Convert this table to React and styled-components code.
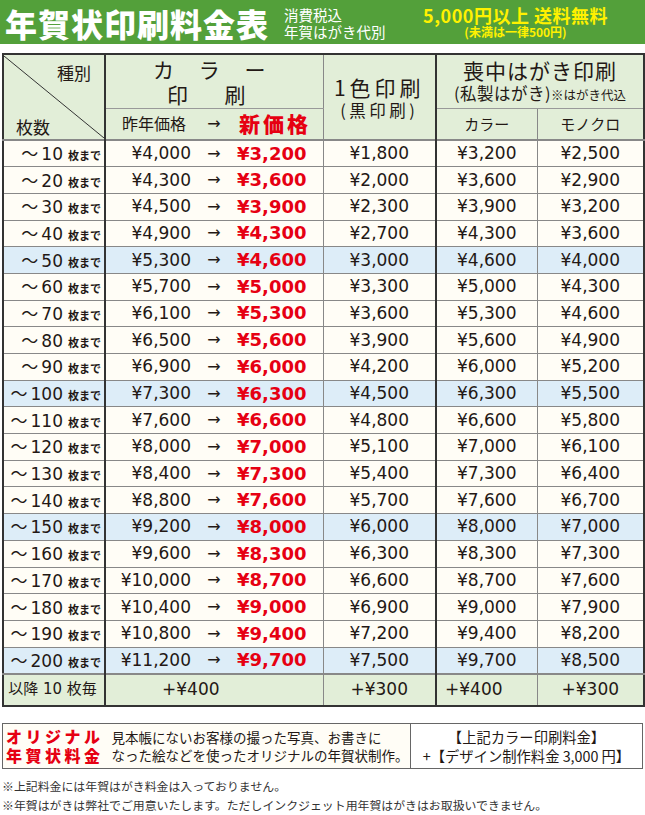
import React from 'react'
import styled, { createGlobalStyle } from 'styled-components'

const rows = [
  [10, 4000, 3200, 1800, 2500],
  [20, 4300, 3600, 2000, 2900],
  [30, 4500, 3900, 2300, 3200],
  [40, 4900, 4300, 2700, 3600],
  [50, 5300, 4600, 3000, 4000],
  [60, 5700, 5000, 3300, 4300],
  [70, 6100, 5300, 3600, 4600],
  [80, 6500, 5600, 3900, 4900],
  [90, 6900, 6000, 4200, 5200],
  [100, 7300, 6300, 4500, 5500],
  [110, 7600, 6600, 4800, 5800],
  [120, 8000, 7000, 5100, 6100],
  [130, 8400, 7300, 5400, 6400],
  [140, 8800, 7600, 5700, 6700],
  [150, 9200, 8000, 6000, 7000],
  [160, 9600, 8300, 6300, 7300],
  [170, 10000, 8700, 6600, 7600],
  [180, 10400, 9000, 6900, 7900],
  [190, 10800, 9400, 7200, 8200],
  [200, 11200, 9700, 7500, 8500],
]

const yen = n => '¥' + n.toLocaleString('en-US')

const App = () => {
  return (
    <>
      <GlobalStyle />
      <Page>
        <TitleBar>
          <Title>年賀状印刷料金表</Title>
          <TaxNote>
            <div>消費税込</div>
            <div>年賀はがき代別</div>
          </TaxNote>
          <Shipping>
            <ShipMain>5,000円以上 送料無料</ShipMain>
            <ShipSub>(未満は一律500円)</ShipSub>
          </Shipping>
        </TitleBar>

        <Table>
          <colgroup>
            <col style={{ width: 102 }} />
            <col style={{ width: 218 }} />
            <col style={{ width: 113 }} />
            <col style={{ width: 101 }} />
            <col style={{ width: 107 }} />
          </colgroup>
          <thead>
            <tr>
              <Th rowSpan={2} $diag>
                <DiagBox>
                  <DiagLine viewBox="0 0 100 100" preserveAspectRatio="none">
                    <line x1="0" y1="0" x2="100" y2="100" stroke="#333" strokeWidth="1" vectorEffect="non-scaling-stroke" />
                  </DiagLine>
                  <Kind>種別</Kind>
                  <Count>枚数</Count>
                </DiagBox>
              </Th>
              <Th $thick $h={53}>
                <BigHead $spacing={10}>カ ラ ー</BigHead>
                <BigHead $spacing={16}>印 刷</BigHead>
              </Th>
              <Th rowSpan={2} $thin>
                <BigHead $spacing={4}>1色印刷</BigHead>
                <SubHead $spacing={3.5}>(黒印刷)</SubHead>
              </Th>
              <Th colSpan={2} $thick>
                <BigHead $spacing={1}>喪中はがき印刷</BigHead>
                <SubHead $spacing={0.5}>(私製はがき)<Small>※はがき代込</Small></SubHead>
              </Th>
            </tr>
            <tr>
              <Th $thick $h={30}>
                <PriceGrid>
                  <OldHead>昨年価格</OldHead>
                  <Arrow>→</Arrow>
                  <NewHead>新価格</NewHead>
                </PriceGrid>
              </Th>
              <Th $thick><ColHead>カラー</ColHead></Th>
              <Th $thin><ColHead>モノクロ</ColHead></Th>
            </tr>
          </thead>
          <tbody>
            {rows.map(([n, oldP, newP, mono, mMono], i) => (
              <Tr key={n} $blue={n % 50 === 0} $first={i === 0}>
                <CountCell>
                  <Tilde>～</Tilde>{n}<Made>枚まで</Made>
                </CountCell>
                <Td $thick>
                  <PriceGrid>
                    <Old>{yen(oldP)}</Old>
                    <Arrow>→</Arrow>
                    <New>{yen(newP)}</New>
                  </PriceGrid>
                </Td>
                <Td $thin $center>{yen(mono)}</Td>
                <Td $thick $center>{yen(newP)}</Td>
                <Td $thin $center>{yen(mMono)}</Td>
              </Tr>
            ))}
            <Tr $green $last>
              <CountCell $plain>以降 10 枚毎</CountCell>
              <Td $thick><Extra $pad={56}>+¥400</Extra></Td>
              <Td $thin $center><Extra>+¥300</Extra></Td>
              <Td $thick><Extra $pad={8}>+¥400</Extra></Td>
              <Td $thin $center><Extra>+¥300</Extra></Td>
            </Tr>
          </tbody>
        </Table>

        <OriginalBox>
          <OriginalLeft>
            <OriginalTitle>
              <div>オリジナル</div>
              <div>年賀状料金</div>
            </OriginalTitle>
            <OriginalDesc>
              <div>見本帳にないお客様の撮った写真、お書きに</div>
              <div>なった絵などを使ったオリジナルの年賀状制作。</div>
            </OriginalDesc>
          </OriginalLeft>
          <OriginalRight>
            <div>【上記カラー印刷料金】</div>
            <div>+【デザイン制作料金 3,000 円】</div>
          </OriginalRight>
        </OriginalBox>

        <Notes>
          <div>※上記料金には年賀はがき料金は入っておりません。</div>
          <div>※年賀はがきは弊社でご用意いたします。ただしインクジェット用年賀はがきはお取扱いできません。</div>
        </Notes>
      </Page>
    </>
  )
}

export default App

const GlobalStyle = createGlobalStyle`
  body {
    margin: 0;
    background: #fff;
    color: #231815;
    font-family: "Noto Sans CJK JP", sans-serif;
  }
`
const Page = styled.div`
  width: 645px;
  display: flex;
  flex-direction: column;
`
const TitleBar = styled.div`
  height: 44px;
  background: #53a03a;
  display: flex;
  align-items: center;
  padding: 0 0 0 5px;
  box-sizing: border-box;
`
const Title = styled.div`
  color: #fff;
  font-size: 32px;
  font-weight: 900;
  letter-spacing: 1px;
  line-height: 1;
  margin-top: 1px;
`
const TaxNote = styled.div`
  color: #fff;
  font-size: 14.5px;
  line-height: 17px;
  margin-left: 15px;
  margin-top: 2px;
`
const Shipping = styled.div`
  color: #fff100;
  font-weight: 700;
  text-align: center;
  margin-left: 30px;
  width: 200px;
`
const ShipMain = styled.div`
  font-size: 18px;
  letter-spacing: 0.5px;
  line-height: 20px;
`
const ShipSub = styled.div`
  font-size: 12px;
  line-height: 14px;
`
const Table = styled.table`
  margin: 9px 0 0 2px;
  width: 641px;
  border-collapse: collapse;
  table-layout: fixed;
  border: 2px solid #333;
`
const Th = styled.th`
  background: #e2eed8;
  font-weight: 400;
  padding: 0;
  height: ${p => (p.$h ? p.$h + 'px' : 'auto')};
  border-left: ${p => (p.$thick ? '2px solid #333' : p.$thin ? '1px solid #888' : 'none')};
  border-bottom: 1px solid #999;
  vertical-align: middle;
  text-align: center;
  line-height: 1.1;
  position: ${p => (p.$diag ? 'relative' : 'static')};
`
const DiagBox = styled.div`
  position: relative;
  height: 82px;
  display: flex;
  flex-direction: column;
  justify-content: space-between;
`
const DiagLine = styled.svg`
  position: absolute;
  inset: 0;
  width: 100%;
  height: 100%;
`
const Kind = styled.div`
  font-size: 17px;
  text-align: right;
  padding: 8px 13px 0 0;
`
const Count = styled.div`
  font-size: 17px;
  text-align: left;
  padding: 0 0 1px 12px;
`
const BigHead = styled.div`
  font-size: 21px;
  letter-spacing: ${p => p.$spacing || 0}px;
  line-height: 25px;
`
const SubHead = styled.div`
  font-size: 16.5px;
  letter-spacing: ${p => p.$spacing || 0}px;
  line-height: 20px;
`
const Small = styled.span`
  font-size: 12.5px;
  letter-spacing: 0;
`
const ColHead = styled.div`
  font-size: 15px;
`
const PriceGrid = styled.div`
  display: grid;
  grid-template-columns: 85px 46px 1fr;
  align-items: center;
`
const OldHead = styled.div`
  font-size: 16px;
  text-align: right;
  padding-right: 5px;
`
const NewHead = styled.div`
  font-size: 21px;
  font-weight: 900;
  color: #e60012;
  letter-spacing: 3px;
  text-align: left;
  padding-left: 2px;
`
const Arrow = styled.div`
  font-family: "DejaVu Sans", sans-serif;
  font-size: 16px;
  text-align: center;
`
const Tr = styled.tr`
  height: ${p => (p.$last ? '32px' : '26.7px')};
  background: ${p => (p.$green ? '#e2eed8' : p.$blue ? '#ddedf8' : '#fffdf6')};
  border-top: ${p => (p.$first || p.$last ? '2px solid #888' : '1px solid #888')};
`
const Td = styled.td`
  padding: 0;
  font-family: "DejaVu Sans", "Noto Sans CJK JP", sans-serif;
  font-size: 17px;
  color: #231815;
  text-align: ${p => (p.$center ? 'center' : 'left')};
  border-left: ${p => (p.$thick ? '2px solid #333' : p.$thin ? '1px solid #888' : 'none')};
  vertical-align: middle;
  line-height: 1;
`
const CountCell = styled.td`
  padding: 0 3px 0 0;
  text-align: ${p => (p.$plain ? 'center' : 'right')};
  font-family: "DejaVu Sans", "Noto Sans CJK JP", sans-serif;
  font-size: ${p => (p.$plain ? '15px' : '17px')};
  vertical-align: middle;
  line-height: 1;
  white-space: nowrap;
`
const Tilde = styled.span`
  font-family: "Noto Sans CJK JP", sans-serif;
  font-size: 17px;
  margin-right: 3px;
`
const Made = styled.span`
  font-family: "Noto Sans CJK JP", sans-serif;
  font-size: 11px;
  font-weight: 700;
  margin-left: 5px;
`
const Old = styled.div`
  text-align: right;
`
const New = styled.div`
  color: #e60012;
  font-weight: 700;
  font-size: 18px;
`
const Extra = styled.div`
  padding-left: ${p => p.$pad || 0}px;
  font-size: 17px;
`
const OriginalBox = styled.div`
  margin: 16px 2px 0 2px;
  height: 46px;
  border: 1px solid #666;
  display: flex;
  box-sizing: border-box;
`
const OriginalLeft = styled.div`
  width: 407px;
  flex-shrink: 0;
  background: #fffdf6;
  display: flex;
  align-items: center;
  border-right: 1px solid #666;
`
const OriginalTitle = styled.div`
  flex-shrink: 0;
  white-space: nowrap;
  color: #e60012;
  font-weight: 900;
  font-size: 16px;
  letter-spacing: 3.5px;
  line-height: 19px;
  margin-left: 3px;
`
const OriginalDesc = styled.div`
  font-size: 13.5px;
  line-height: 18px;
  margin-left: 8px;
  white-space: nowrap;
`
const OriginalRight = styled.div`
  flex: 1;
  background: #fff;
  display: flex;
  flex-direction: column;
  justify-content: center;
  align-items: center;
  font-size: 14.3px;
  line-height: 19px;
  white-space: nowrap;
`
const Notes = styled.div`
  margin: 7px 0 0 2px;
  font-size: 11.9px;
  line-height: 19px;
  color: #333;
  white-space: nowrap;
`
